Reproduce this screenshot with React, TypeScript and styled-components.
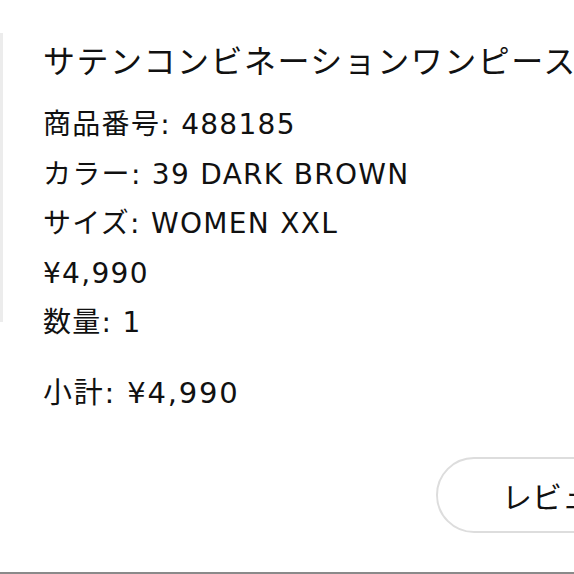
import React from 'react';
import styled, { createGlobalStyle } from 'styled-components';

const GlobalStyle = createGlobalStyle`
  html, body {
    margin: 0;
    padding: 0;
    background: #fff;
  }
  body {
    font-family: 'DejaVu Sans', 'Noto Sans CJK JP', sans-serif;
    color: #111;
  }
`;

const Page = styled.div`
  width: 574px;
  height: 574px;
  overflow: hidden;
  display: flex;
  flex-direction: column;
`;

const ItemRow = styled.div`
  display: flex;
  align-items: flex-start;
`;

const Thumb = styled.div`
  width: 3px;
  height: 289px;
  margin-top: 33px;
  background: #ececec;
  flex-shrink: 0;
`;

const Info = styled.div`
  padding: 42px 0 0 40px;
  min-width: 0;
`;

const Title = styled.h1`
  margin: 0 0 18px;
  font-size: 32px;
  font-weight: 400;
  line-height: 40px;
  letter-spacing: 1.5px;
  white-space: nowrap;
`;

const Detail = styled.p<{ $gap?: number; $large?: boolean }>`
  margin: ${(p) => p.$gap ?? 0}px 0 0;
  font-size: ${(p) => (p.$large ? 29 : 28)}px;
  line-height: 49.5px;
  letter-spacing: ${(p) => (p.$large ? 1.8 : 1.3)}px;
  white-space: nowrap;
`;

const ActionRow = styled.div`
  display: flex;
  padding: 39px 0 0 436px;
`;

const ReviewButton = styled.button`
  flex-shrink: 0;
  width: 320px;
  height: 76px;
  border: 2px solid #dddddd;
  border-radius: 38px;
  background: #fff;
  font-family: 'DejaVu Sans', 'Noto Sans CJK JP', sans-serif;
  font-size: 30px;
  color: #111;
  text-align: left;
  padding: 0 0 0 64px;
`;

const BottomRule = styled.div`
  margin-top: auto;
  height: 2px;
  background: #8a8a8a;
`;

const App = () => {
  return (
    <Page>
      <GlobalStyle />
      <ItemRow>
        <Thumb />
        <Info>
          <Title>サテンコンビネーションワンピース</Title>
          <Detail>商品番号: 488185</Detail>
          <Detail>カラー: 39 DARK BROWN</Detail>
          <Detail>サイズ: WOMEN XXL</Detail>
          <Detail>¥4,990</Detail>
          <Detail>数量: 1</Detail>
          <Detail $gap={21} $large>
            小計: ¥4,990
          </Detail>
        </Info>
      </ItemRow>
      <ActionRow>
        <ReviewButton>レビューを書く</ReviewButton>
      </ActionRow>
      <BottomRule />
    </Page>
  );
};

export default App;
